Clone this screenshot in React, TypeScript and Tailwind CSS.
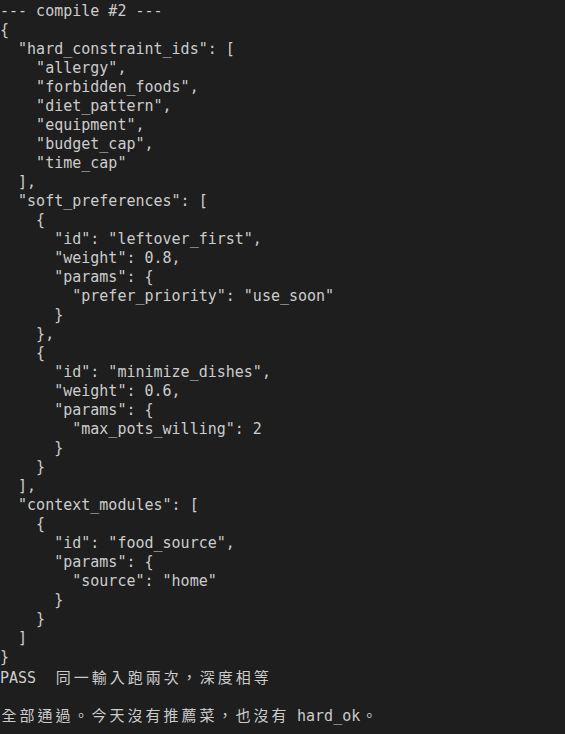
import React from "react";

const lines: string[] = [
  "--- compile #2 ---",
  "{",
  '  "hard_constraint_ids": [',
  '    "allergy",',
  '    "forbidden_foods",',
  '    "diet_pattern",',
  '    "equipment",',
  '    "budget_cap",',
  '    "time_cap"',
  "  ],",
  '  "soft_preferences": [',
  "    {",
  '      "id": "leftover_first",',
  '      "weight": 0.8,',
  '      "params": {',
  '        "prefer_priority": "use_soon"',
  "      }",
  "    },",
  "    {",
  '      "id": "minimize_dishes",',
  '      "weight": 0.6,',
  '      "params": {',
  '        "max_pots_willing": 2',
  "      }",
  "    }",
  "  ],",
  '  "context_modules": [',
  "    {",
  '      "id": "food_source",',
  '      "params": {',
  '        "source": "home"',
  "      }",
  "    }",
  "  ]",
  "}",
  "PASS  同一輸入跑兩次，深度相等",
  "",
  "全部通過。今天沒有推薦菜，也沒有 hard_ok。",
];

const isWide = (c: string) => /[\u3000-\u9fff\uff00-\uffef]/.test(c);

function Line({ text }: { text: string }) {
  const parts: React.ReactNode[] = [];
  let buf = "";
  let k = 0;
  for (const ch of Array.from(text)) {
    if (isWide(ch)) {
      if (buf) {
        parts.push(<span key={k++}>{buf}</span>);
        buf = "";
      }
      parts.push(
        <span
          key={k++}
          className="inline-block w-[18px] text-center font-['Noto_Sans_CJK_TC',sans-serif]"
        >
          {ch}
        </span>
      );
    } else {
      buf += ch;
    }
  }
  if (buf) parts.push(<span key={k++}>{buf}</span>);
  return <div className="h-[19px] whitespace-pre">{parts.length ? parts : "\u00a0"}</div>;
}

export default function App() {
  return (
    <div className="w-[565px] h-[734px] overflow-hidden bg-[#1e1e1e] text-[#cccccc] pt-[2px] pl-0 font-['DejaVu_Sans_Mono','Liberation_Mono',monospace] text-[15px] leading-[19px]">
      {lines.map((l, i) => (
        <Line key={i} text={l} />
      ))}
    </div>
  );
}
